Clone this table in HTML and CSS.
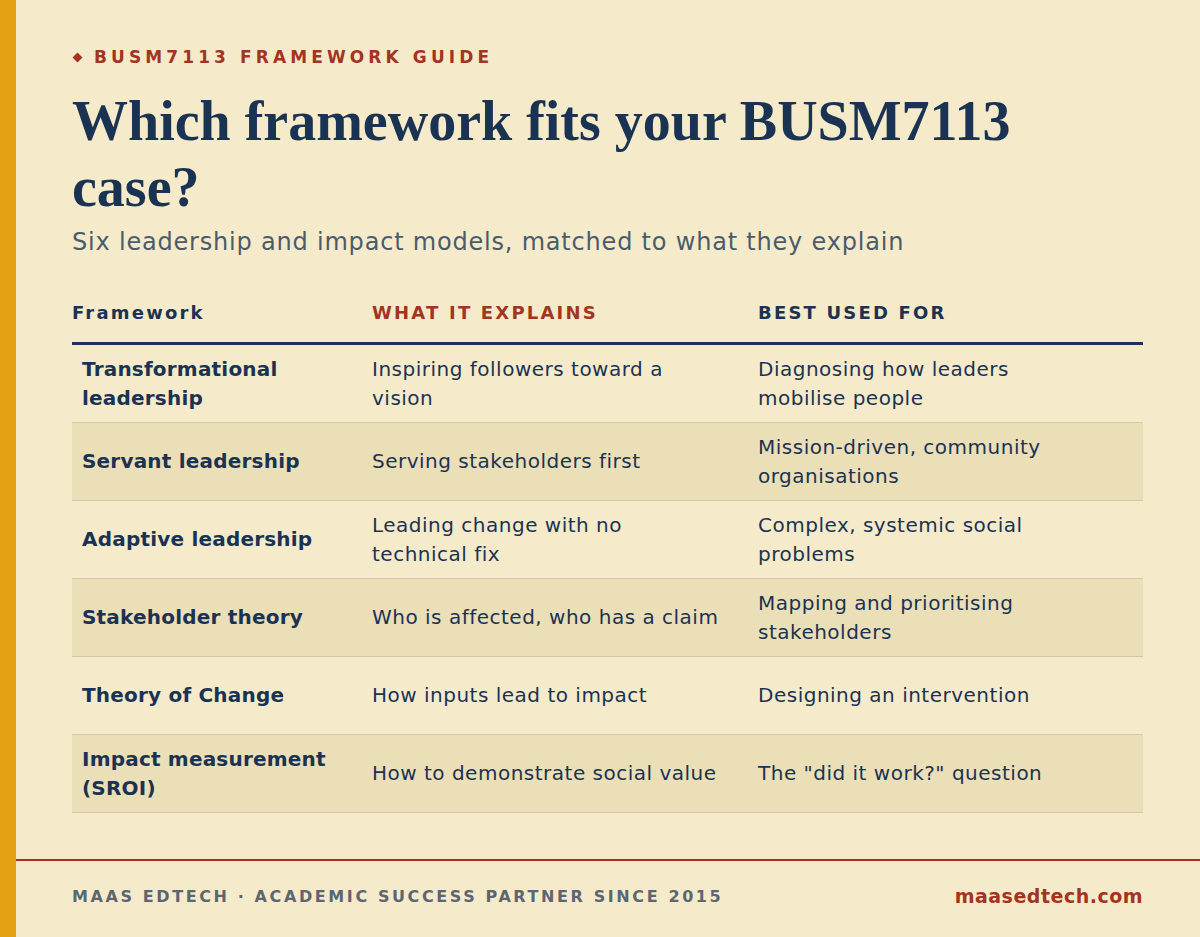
FILE: index.html
```html
<!DOCTYPE html>
<html lang="en">
<head>
<meta charset="utf-8">
<title>BUSM7113 Framework Guide</title>
<link rel="stylesheet" href="styles.css">
</head>
<body>
<div class="page">
  <main class="content">
    <header class="intro">
      <p class="eyebrow"><span class="diamond"></span>BUSM7113 Framework Guide</p>
      <h1 class="title">Which framework fits your BUSM7113 case?</h1>
      <p class="subtitle">Six leadership and impact models, matched to what they explain</p>
    </header>
    <table class="frameworks">
      <colgroup>
        <col class="col-name">
        <col class="col-explains">
        <col class="col-use">
      </colgroup>
      <thead>
        <tr>
          <th class="th-name">Framework</th>
          <th class="th-explains">What it explains</th>
          <th class="th-use">Best used for</th>
        </tr>
      </thead>
      <tbody>
        <tr>
          <td class="name">Transformational leadership</td>
          <td>Inspiring followers toward a vision</td>
          <td>Diagnosing how leaders mobilise&nbsp;people</td>
        </tr>
        <tr class="alt">
          <td class="name">Servant leadership</td>
          <td>Serving stakeholders first</td>
          <td>Mission-driven, community organisations</td>
        </tr>
        <tr>
          <td class="name">Adaptive leadership</td>
          <td>Leading change with no technical&nbsp;fix</td>
          <td>Complex, systemic social problems</td>
        </tr>
        <tr class="alt">
          <td class="name">Stakeholder theory</td>
          <td>Who is affected, who has a claim</td>
          <td>Mapping and prioritising stakeholders</td>
        </tr>
        <tr>
          <td class="name">Theory of Change</td>
          <td>How inputs lead to impact</td>
          <td>Designing an intervention</td>
        </tr>
        <tr class="alt">
          <td class="name">Impact measurement (SROI)</td>
          <td>How to demonstrate social value</td>
          <td>The "did it work?" question</td>
        </tr>
      </tbody>
    </table>
  </main>
  <footer class="footer">
    <span class="credit">Maas EdTech · Academic Success Partner since 2015</span>
    <span class="site">maasedtech.com</span>
  </footer>
</div>
</body>
</html>
```

FILE: styles.css
```css
* { box-sizing: border-box; }

html, body {
  margin: 0;
  padding: 0;
  height: 100%;
}

body {
  background: #f5ebca;
  font-family: "DejaVu Sans", "Open Sans", sans-serif;
  color: #1b3353;
}

.page {
  min-height: 937px;
  border-left: 16px solid #e5a114;
  display: flex;
  flex-direction: column;
}

.content {
  flex: 1;
  padding: 47px 57px 0 56px;
}

.intro {
  display: flex;
  flex-direction: column;
}

.eyebrow {
  margin: 0;
  display: flex;
  align-items: center;
  gap: 13px;
  font-size: 17px;
  line-height: 20px;
  font-weight: 700;
  letter-spacing: 4.1px;
  text-transform: uppercase;
  color: #a5331f;
}

.diamond {
  width: 7px;
  height: 7px;
  background: #a5331f;
  transform: rotate(45deg);
  margin-left: 2px;
}

.title {
  margin: 21px 0 0;
  max-width: 960px;
  font-family: "Liberation Serif", "Times New Roman", serif;
  font-weight: 700;
  font-size: 56px;
  line-height: 66px;
  color: #1b3353;
}

.subtitle {
  margin: 7px 0 0;
  font-size: 24px;
  line-height: 30px;
  letter-spacing: 0.8px;
  color: #4b5b6b;
}

.frameworks {
  width: 100%;
  margin-top: 45px;
  border-collapse: collapse;
  table-layout: fixed;
}

.col-name { width: 300px; }
.col-explains { width: 386px; }

.frameworks th {
  text-align: left;
  padding: 0 0 18px;
  font-size: 18px;
  line-height: 22px;
  font-weight: 800;
  letter-spacing: 2.2px;
  text-transform: uppercase;
  border-bottom: 3px solid #1b3353;
}

.frameworks th.th-name {
  text-transform: none;
  color: #1b3353;
}

.th-explains { color: #a5331f; }
.th-use { color: #1b3353; }

.frameworks td {
  padding: 10px 50px 10px 0;
  font-size: 20px;
  line-height: 28.5px;
  letter-spacing: 0.5px;
  vertical-align: middle;
  color: #1b3353;
  border-bottom: 1px solid #d4c8a4;
  height: 78px;
}

.frameworks td:nth-child(2) {
  padding-right: 34px;
}

.frameworks td.name {
  padding-left: 10px;
  padding-right: 20px;
  font-weight: 700;
  letter-spacing: 0.2px;
}

.frameworks tr.alt td {
  background: #ebdfb7;
}

.footer {
  border-top: 2px solid #a5331f;
  padding: 24px 57px 30px 56px;
  display: flex;
  justify-content: space-between;
  align-items: center;
}

.credit {
  font-size: 16px;
  font-weight: 700;
  letter-spacing: 2.6px;
  text-transform: uppercase;
  color: #5c6670;
}

.site {
  font-size: 19px;
  font-weight: 700;
  letter-spacing: 0.5px;
  color: #a5331f;
}
```
